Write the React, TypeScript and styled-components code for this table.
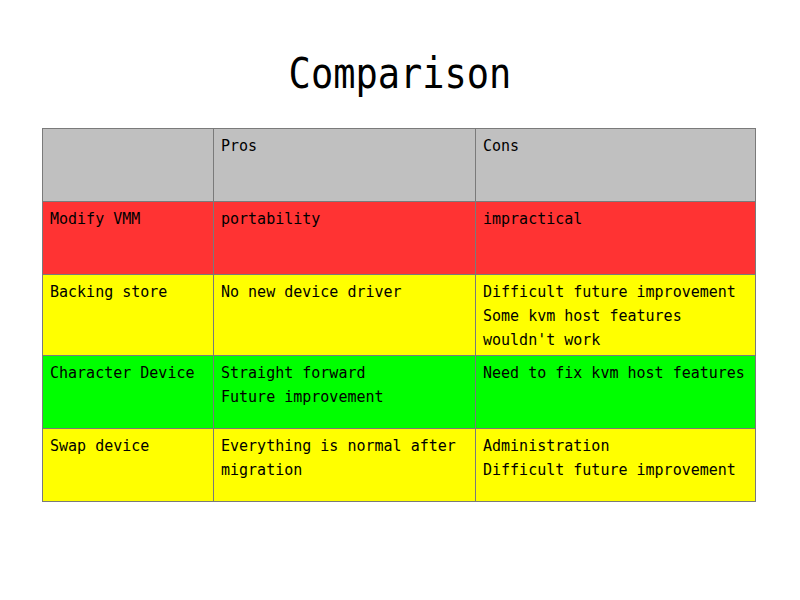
import React from "react";
import styled, { createGlobalStyle } from "styled-components";

const GlobalStyle = createGlobalStyle`
  html, body {
    margin: 0;
    padding: 0;
    background: #ffffff;
  }
`;

type Tone = "head" | "red" | "yellow" | "green";

const TONES: Record<Tone, string> = {
  head: "#c0c0c0",
  red: "#ff3333",
  yellow: "#ffff00",
  green: "#00ff00",
};

const ROWS: { tone: Tone; cells: string[][] }[] = [
  { tone: "head", cells: [[], ["Pros"], ["Cons"]] },
  { tone: "red", cells: [["Modify VMM"], ["portability"], ["impractical"]] },
  {
    tone: "yellow",
    cells: [
      ["Backing store"],
      ["No new device driver"],
      ["Difficult future improvement", "Some kvm host features wouldn't work"],
    ],
  },
  {
    tone: "green",
    cells: [
      ["Character Device"],
      ["Straight forward", "Future improvement"],
      ["Need to fix kvm host features"],
    ],
  },
  {
    tone: "yellow",
    cells: [
      ["Swap device"],
      ["Everything is normal after migration"],
      ["Administration", "Difficult future improvement"],
    ],
  },
];

const Slide = styled.div`
  width: 800px;
  height: 600px;
  box-sizing: border-box;
  padding-top: 58px;
  display: flex;
  flex-direction: column;
  align-items: center;
  font-family: "DejaVu Sans Mono", "Liberation Mono", monospace;
  color: #000000;
`;

const Title = styled.h1`
  margin: 0 0 33px;
  font-size: 37px;
  line-height: 1;
  font-weight: normal;
  transform: scaleY(1.15);
  transform-origin: center bottom;
`;

const Grid = styled.table`
  border-collapse: collapse;
  table-layout: fixed;
  width: 713px;
  margin-left: -2px;
`;

const Row = styled.tr<{ $tone: Tone }>`
  height: 73px;
  background: ${({ $tone }) => TONES[$tone]};
`;

const Cell = styled.td`
  border: 1px solid #7a7a7a;
  padding: 5px 7px 3px;
  vertical-align: top;
  font-size: 15px;
  line-height: 24px;
`;

const Line = styled.div`
  white-space: normal;
`;

const App: React.FC = () => (
  <>
    <GlobalStyle />
    <Slide>
      <Title>Comparison</Title>
      <Grid>
        <colgroup>
          <col style={{ width: 171 }} />
          <col style={{ width: 262 }} />
          <col style={{ width: 280 }} />
        </colgroup>
        <tbody>
          {ROWS.map((row, i) => (
            <Row key={i} $tone={row.tone}>
              {row.cells.map((lines, j) => (
                <Cell key={j}>
                  {lines.map((text) => (
                    <Line key={text}>{text}</Line>
                  ))}
                </Cell>
              ))}
            </Row>
          ))}
        </tbody>
      </Grid>
    </Slide>
  </>
);

export default App;
